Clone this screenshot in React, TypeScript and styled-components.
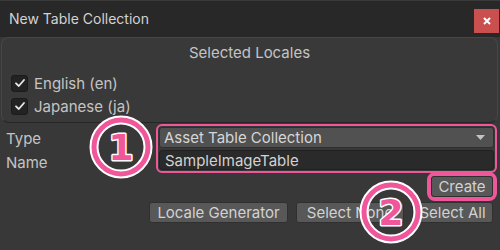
import { createGlobalStyle, styled } from 'styled-components';

const pink = '#f0579a';

const GlobalStyle = createGlobalStyle`
  html, body {
    margin: 0;
    padding: 0;
    background: #383838;
    width: 500px;
    height: 250px;
    overflow: hidden;
  }
  * {
    box-sizing: border-box;
  }
`;

const Window = styled.div`
  position: relative;
  width: 500px;
  height: 250px;
  background: #383838;
  font-family: Inter, 'Noto Sans', sans-serif;
  font-size: 15px;
  color: #c4c4c4;
  border-top: 1px solid #3a3a3a;
`;

const TitleBar = styled.div`
  display: flex;
  justify-content: space-between;
  height: 36px;
  background: #282828;
  padding-left: 9px;
`;

const Title = styled.div`
  font-size: 14px;
  line-height: 36px;
  color: #d2d2d2;
`;

const CloseButton = styled.div`
  margin-top: 8px;
  margin-right: 1px;
  width: 25px;
  height: 24px;
  background: #c9504f;
  color: #fff;
  display: flex;
  align-items: center;
  justify-content: center;
`;

const Panel = styled.div`
  margin: 0 2px 0 1px;
  height: 86px;
  background: #393939;
  border: 1px solid #474747;
  border-bottom-color: #262626;
  border-radius: 8px;
`;

const PanelHeading = styled.div`
  text-align: center;
  line-height: 28px;
  padding-top: 1px;
`;

const LocaleList = styled.div`
  display: flex;
  flex-direction: column;
  gap: 5px;
  padding: 7px 0 0 9px;
`;

const LocaleRow = styled.label`
  display: flex;
  align-items: center;
  gap: 6px;
  height: 18px;
`;

const CheckBox = styled.span`
  width: 17px;
  height: 17px;
  border-radius: 3px;
  background: #232323;
  border: 1px solid #1b1b1b;
  display: flex;
  align-items: center;
  justify-content: center;
`;

const FormRow = styled.div`
  display: flex;
  margin-top: 1px;
`;

const Labels = styled.div`
  width: 156px;
  padding: 6px 0 0 6px;
  display: flex;
  flex-direction: column;
  gap: 6px;
  line-height: 18px;
`;

const Highlight = styled.div<{ $radius: number; $width: number }>`
  border: ${({ $width }) => $width}px solid ${pink};
  border-radius: ${({ $radius }) => $radius}px;
  padding: 1px;
`;

const Fields = styled(Highlight)`
  width: 341px;
  display: flex;
  flex-direction: column;
  gap: 2px;
`;

const Dropdown = styled.div`
  height: 21px;
  background: #515151;
  border: 1px solid #2f2f2f;
  border-radius: 3px;
  padding: 0 8px 0 4px;
  display: flex;
  align-items: center;
  justify-content: space-between;
  color: #d6d6d6;
`;

const TextField = styled.div`
  height: 20px;
  background: #2a2a2a;
  border: 1px solid #212121;
  border-radius: 3px;
  padding: 0 5px;
  display: flex;
  align-items: center;
  color: #d2d2d2;
`;

const CreateRow = styled.div`
  display: flex;
  justify-content: flex-end;
  padding-right: 3px;
  margin-top: -1px;
`;

const CreateFrame = styled(Highlight)`
  padding: 0;
`;

const Button = styled.div<{ $width: number }>`
  width: ${({ $width }) => $width}px;
  height: 21px;
  background: #585858;
  border: 1px solid #303030;
  border-radius: 3px;
  display: flex;
  align-items: center;
  justify-content: center;
  color: #d2d2d2;
  white-space: nowrap;
`;

const ButtonRow = styled.div`
  display: flex;
  justify-content: flex-end;
  gap: 8px;
  padding-right: 7px;
  margin-top: 1px;
`;

const Badge = styled.svg<{ $x: number; $y: number }>`
  position: absolute;
  left: ${({ $x }) => $x}px;
  top: ${({ $y }) => $y}px;
  overflow: visible;
`;

const CircledNumber = ({ n, x, y }: { n: string; x: number; y: number }) => (
  <Badge $x={x} $y={y} width="66" height="66" viewBox="0 0 66 66">
    <circle cx="33" cy="33" r="27" fill="none" stroke="#fff" strokeWidth="9" />
    <circle cx="33" cy="33" r="27" fill="none" stroke={pink} strokeWidth="5" />
    <text
      x="33"
      y="46"
      textAnchor="middle"
      fontFamily="'DejaVu Sans', sans-serif"
      fontWeight="bold"
      fontSize="36"
      fill={pink}
      stroke="#fff"
      strokeWidth="3"
      paintOrder="stroke"
      strokeLinejoin="round"
    >
      {n}
    </text>
  </Badge>
);

const Check = () => (
  <svg width="12" height="12" viewBox="0 0 12 12">
    <path d="M2 6.3 L4.8 9 L10 3" fill="none" stroke="#e8e8e8" strokeWidth="1.8" strokeLinecap="round" strokeLinejoin="round" />
  </svg>
);

const App = () => {
  const locales = ['English (en)', 'Japanese (ja)'];
  return (
    <>
      <GlobalStyle />
      <Window>
        <TitleBar>
          <Title>New Table Collection</Title>
          <CloseButton>
            <svg width="10" height="10" viewBox="0 0 10 10">
              <path d="M2 2 L8 8 M8 2 L2 8" stroke="#fff" strokeWidth="2" />
            </svg>
          </CloseButton>
        </TitleBar>
        <Panel>
          <PanelHeading>Selected Locales</PanelHeading>
          <LocaleList>
            {locales.map((l) => (
              <LocaleRow key={l}>
                <CheckBox>
                  <Check />
                </CheckBox>
                {l}
              </LocaleRow>
            ))}
          </LocaleList>
        </Panel>
        <FormRow>
          <Labels>
            <span>Type</span>
            <span>Name</span>
          </Labels>
          <Fields $radius={6} $width={2}>
            <Dropdown>
              Asset Table Collection
              <svg width="9" height="5" viewBox="0 0 9 5">
                <path d="M0 0 L9 0 L4.5 5 Z" fill="#c4c4c4" />
              </svg>
            </Dropdown>
            <TextField>SampleImageTable</TextField>
          </Fields>
        </FormRow>
        <CreateRow>
          <CreateFrame $radius={8} $width={4}>
            <Button $width={62}>Create</Button>
          </CreateFrame>
        </CreateRow>
        <ButtonRow>
          <Button $width={139}>Locale Generator</Button>
          <Button $width={108}>Select None</Button>
          <Button $width={81}>Select All</Button>
        </ButtonRow>
        <CircledNumber n="1" x={88} y={113} />
        <CircledNumber n="2" x={358} y={178} />
      </Window>
    </>
  );
};

export default App;
